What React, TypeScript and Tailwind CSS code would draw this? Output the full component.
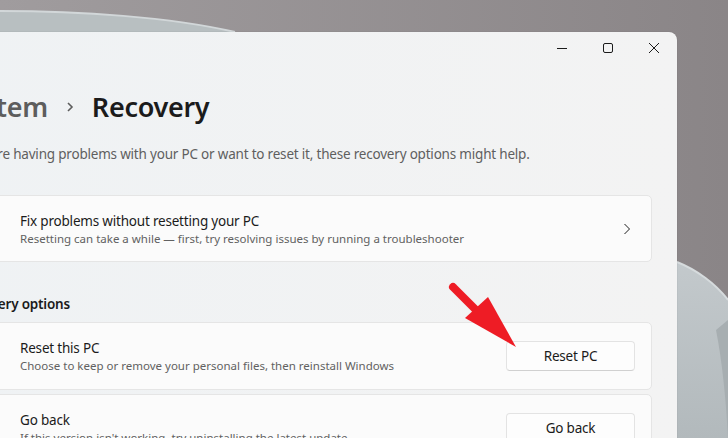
import React from 'react'

const font = { fontFamily: '"Noto Sans", "Open Sans", sans-serif' }

function Wallpaper() {
  return (
    <svg className="absolute inset-0" width="728" height="438" viewBox="0 0 728 438">
      <defs>
        <linearGradient id="wpTop" x1="0" y1="0" x2="1" y2="0">
          <stop offset="0" stopColor="#a09c9e" />
          <stop offset="1" stopColor="#8a8587" />
        </linearGradient>
        <linearGradient id="wpRight" x1="0" y1="0" x2="0" y2="1">
          <stop offset="0" stopColor="#c3c9cc" />
          <stop offset="1" stopColor="#b2b9bc" />
        </linearGradient>
      </defs>
      <rect width="728" height="438" fill="url(#wpTop)" />
      <path d="M0 11 C80 11 170 17 235 32 L0 32 Z" fill="#b8bfc1" />
      <path d="M0 11 C80 11 170 17 235 32" stroke="#d2d7d9" strokeWidth="2" fill="none" />
      <path d="M677 262 C697 270 716 284 728 300 L728 438 L677 438 Z" fill="url(#wpRight)" />
      <path d="M677 262 C697 270 716 284 728 300" stroke="#d6dbdd" strokeWidth="2" fill="none" />
      <path d="M716 330 C722 360 726 400 728 438 L728 320 Z" fill="#a7aeb1" />
    </svg>
  )
}

function Card({ title, sub, children }: { title: string; sub: string; children: React.ReactNode }) {
  return (
    <div className="flex h-[68px] items-center justify-between rounded-[5px] border border-[#e5e5e5] bg-[#fbfbfb] pl-[59px] pr-4">
      <div className="flex flex-col">
        <span className="text-[13.5px] leading-5 tracking-[-0.2px] text-[#1b1b1b]">{title}</span>
        <span className="text-[11.5px] leading-4 text-[#616161]">{sub}</span>
      </div>
      {children}
    </div>
  )
}

export default function App() {
  return (
    <div className="relative h-[438px] w-[728px] overflow-hidden" style={font}>
      <Wallpaper />

      {/* Settings window */}
      <div className="absolute left-[-40px] top-[32px] flex h-[430px] w-[717px] flex-col rounded-tr-lg bg-gradient-to-r from-[#eff2f4] to-[#f3f3f3] shadow-[0_0_1px_rgba(0,0,0,0.3)]">
        {/* Title bar */}
        <div className="flex h-8 justify-end">
          <button className="flex h-8 w-[46px] items-center justify-center">
            <svg width="10" height="10" viewBox="0 0 10 10"><path d="M0 5.5h10" stroke="#1b1b1b" strokeWidth="1" /></svg>
          </button>
          <button className="flex h-8 w-[46px] items-center justify-center">
            <svg width="10" height="10" viewBox="0 0 10 10"><rect x="0.5" y="0.5" width="9" height="9" rx="1.5" stroke="#1b1b1b" fill="none" /></svg>
          </button>
          <button className="flex h-8 w-[46px] items-center justify-center">
            <svg width="10" height="10" viewBox="0 0 10 10"><path d="M0 0L10 10M10 0L0 10" stroke="#1b1b1b" strokeWidth="1" /></svg>
          </button>
        </div>

        <div className="flex flex-col pr-[25px]">
          <h1 className="ml-[-6px] mt-[25px] flex items-center text-[27px] font-semibold leading-9 tracking-[-0.3px]">
            <span className="text-[#5d5d5d]">System</span>
            <svg className="mx-[18px]" width="8" height="12" viewBox="0 0 8 12"><path d="M2 2l4 4-4 4" stroke="#5d5d5d" strokeWidth="1.6" fill="none" /></svg>
            <span className="text-[#1b1b1b]">Recovery</span>
          </h1>
          <p className="mt-[19px] text-[13.5px] leading-5 tracking-[-0.2px] text-[#5f5f5f]">
            If you're having problems with your PC or want to reset it, these recovery options might help.
          </p>

          <div className="mt-[31px] flex h-[67px] items-center justify-between rounded-[5px] border border-[#e5e5e5] bg-[#fbfbfb] pl-[59px] pr-[20px]">
            <div className="flex flex-col">
              <span className="text-[13.5px] leading-5 tracking-[-0.2px] text-[#1b1b1b]">Fix problems without resetting your PC</span>
              <span className="text-[11.5px] leading-4 text-[#616161]">Resetting can take a while — first, try resolving issues by running a troubleshooter</span>
            </div>
            <svg width="8" height="12" viewBox="0 0 8 12"><path d="M1.5 1l5 5-5 5" stroke="#1b1b1b" strokeWidth="1" fill="none" /></svg>
          </div>

          <h2 className="mt-[32px] text-[13.5px] font-semibold leading-5 tracking-[-0.2px] text-[#1b1b1b]">Recovery options</h2>

          <div className="mt-2 flex flex-col gap-1">
            <Card title="Reset this PC" sub="Choose to keep or remove your personal files, then reinstall Windows">
              <button className="h-[30px] w-[129px] rounded-[4px] border border-[#e3e3e3] border-b-[#d0d0d0] bg-[#fdfdfd] text-[13.5px] tracking-[-0.2px] text-[#1b1b1b]">Reset PC</button>
            </Card>
            <Card title="Go back" sub="If this version isn't working, try uninstalling the latest update">
              <button className="h-[30px] w-[129px] rounded-[4px] border border-[#e3e3e3] border-b-[#d0d0d0] bg-[#fdfdfd] text-[13.5px] tracking-[-0.2px] text-[#1b1b1b]">Go back</button>
            </Card>
          </div>
        </div>
      </div>

      {/* Red annotation arrow */}
      <svg className="absolute left-0 top-0" width="728" height="438" viewBox="0 0 728 438">
        <path d="M453 287 L480 314" stroke="#ee1c25" strokeWidth="8" strokeLinecap="round" />
        <path d="M465 318 L488 297 L516 347 Z" fill="#ee1c25" />
      </svg>
    </div>
  )
}
